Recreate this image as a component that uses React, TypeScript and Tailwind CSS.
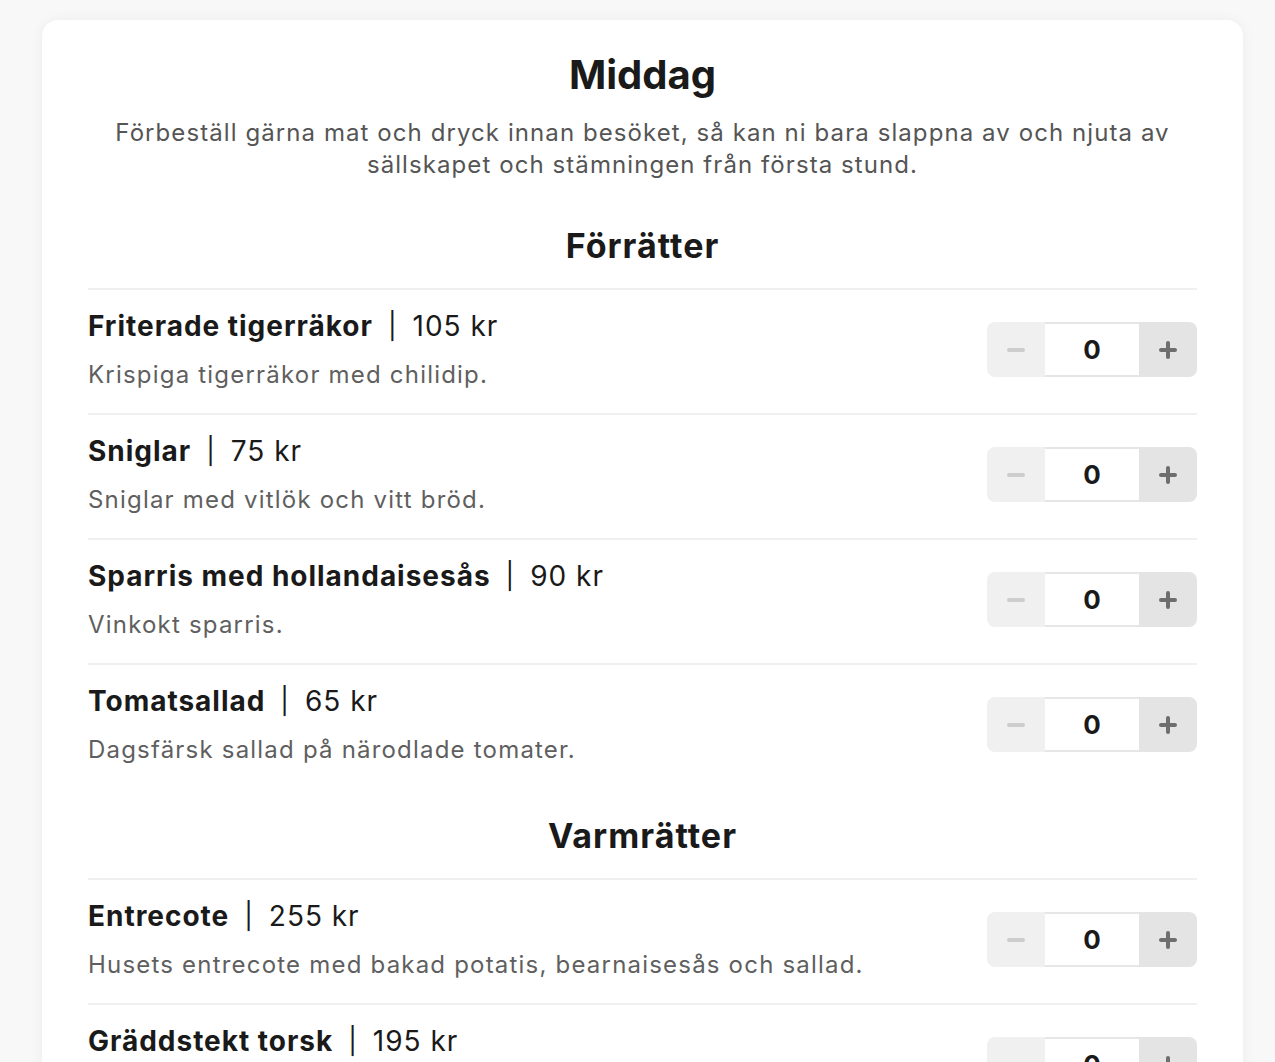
import React, { useState } from 'react';

type Dish = { name: string; price: number; description: string };

const MENU: { title: string; dishes: Dish[] }[] = [
  {
    title: 'Förrätter',
    dishes: [
      { name: 'Friterade tigerräkor', price: 105, description: 'Krispiga tigerräkor med chilidip.' },
      { name: 'Sniglar', price: 75, description: 'Sniglar med vitlök och vitt bröd.' },
      { name: 'Sparris med hollandaisesås', price: 90, description: 'Vinkokt sparris.' },
      { name: 'Tomatsallad', price: 65, description: 'Dagsfärsk sallad på närodlade tomater.' },
    ],
  },
  {
    title: 'Varmrätter',
    dishes: [
      { name: 'Entrecote', price: 255, description: 'Husets entrecote med bakad potatis, bearnaisesås och sallad.' },
      { name: 'Gräddstekt torsk', price: 195, description: 'Torskrygg med vitvinssås och potatispuré.' },
    ],
  },
];

const Stepper: React.FC<{ value: number; onChange: (v: number) => void }> = ({ value, onChange }) => (
  <div className="flex h-[55px] w-[210px] shrink-0 overflow-hidden rounded-lg">
    <button
      onClick={() => onChange(Math.max(0, value - 1))}
      className="flex w-[58px] items-center justify-center bg-[#f0f0f0]"
    >
      <svg width="20" height="20" viewBox="0 0 20 20">
        <line x1="3" y1="10" x2="17" y2="10" stroke="#cdcdcd" strokeWidth="4" strokeLinecap="round" />
      </svg>
    </button>
    <div className="flex flex-1 items-center justify-center border-y-2 border-[#e6e6e6] bg-white text-[26px] font-bold text-[#1a1a1a]">
      {value}
    </div>
    <button
      onClick={() => onChange(value + 1)}
      className="flex w-[58px] items-center justify-center bg-[#e4e4e4]"
    >
      <svg width="20" height="20" viewBox="0 0 20 20">
        <line x1="3" y1="10" x2="17" y2="10" stroke="#6e6e6e" strokeWidth="4" strokeLinecap="round" />
        <line x1="10" y1="3" x2="10" y2="17" stroke="#6e6e6e" strokeWidth="4" strokeLinecap="round" />
      </svg>
    </button>
  </div>
);

export default function App() {
  const [counts, setCounts] = useState<Record<string, number>>({});

  return (
    <div
      className="min-h-screen bg-[#f8f8f8] pl-[42px] pr-[32px] pt-5"
      style={{ fontFamily: 'Inter, "Noto Sans", sans-serif' }}
    >
      <div className="rounded-2xl bg-white px-[46px] pb-10 pt-[31px] shadow-[0_0_14px_rgba(0,0,0,0.05)]">
        <h1 className="text-center text-[40px] font-bold leading-[48px] text-[#1a1a1a]">Middag</h1>
        <p className="mx-auto mt-[18px] text-center text-[24px] leading-[32px] tracking-[0.045em] text-[#555]">
          Förbeställ gärna mat och dryck innan besöket, så kan ni bara slappna av och njuta av sällskapet och stämningen från första stund.
        </p>

        {MENU.map((section, sIdx) => (
          <div key={section.title} className={sIdx === 0 ? 'mt-[45px]' : 'mt-[28px]'}>
            <h2 className="border-b-2 border-[#f0f0f0] pb-[22px] text-center text-[34px] font-bold leading-[40px] tracking-[0.03em] text-[#1a1a1a]">
              {section.title}
            </h2>
            {section.dishes.map((dish, idx) => (
              <div
                key={dish.name}
                className={`flex items-center justify-between pb-[22px] pt-[18px] ${idx < section.dishes.length - 1 ? 'border-b-2 border-[#f0f0f0]' : ''}`}
              >
                <div>
                  <div className="flex items-center text-[28px] leading-[36px] tracking-[0.035em] text-[#1a1a1a]">
                    <span className="font-bold">{dish.name}</span>
                    <span className="mx-[15px] text-[26px] font-normal">|</span>
                    <span>{dish.price} kr</span>
                  </div>
                  <p className="mt-[15px] text-[24px] leading-[32px] tracking-[0.05em] text-[#5f5f5f]">{dish.description}</p>
                </div>
                <Stepper
                  value={counts[dish.name] ?? 0}
                  onChange={(v) => setCounts({ ...counts, [dish.name]: v })}
                />
              </div>
            ))}
          </div>
        ))}
      </div>
    </div>
  );
}
